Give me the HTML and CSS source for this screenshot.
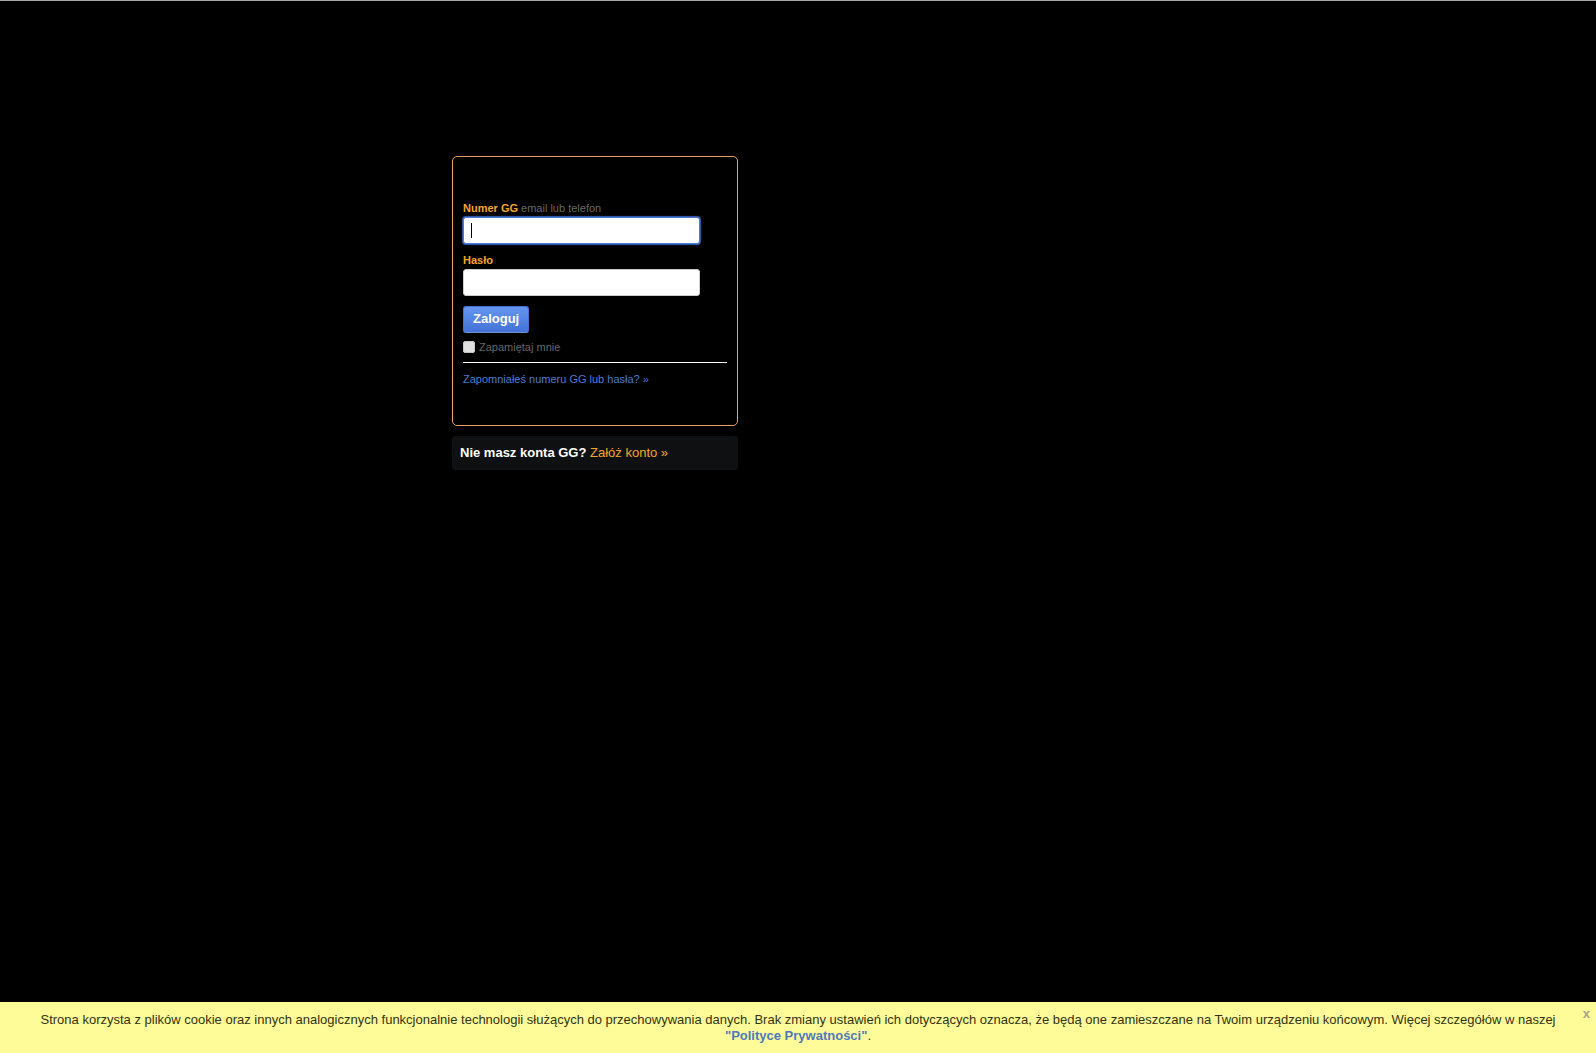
FILE: index.html
```html
<!DOCTYPE html>
<html lang="pl">
<head>
<meta charset="utf-8">
<meta name="viewport" content="width=device-width, initial-scale=1">
<title>GG - logowanie</title>
<link rel="stylesheet" href="styles.css">
</head>
<body>
<main class="page">
  <div class="column">
    <form class="login">
      <label class="label" for="login">Numer GG <span class="hint">email lub telefon</span></label>
      <div class="field">
        <input class="input input-active" id="login" type="text" autofocus>
        <span class="caret"></span>
      </div>
      <label class="label" for="password">Hasło</label>
      <div class="field">
        <input class="input" id="password" type="password">
      </div>
      <button class="submit" type="submit">Zaloguj</button>
      <div class="remember">
        <input class="check" id="remember" type="checkbox">
        <label for="remember">Zapamiętaj mnie</label>
      </div>
      <div class="forgot"><a href="#">Zapomniałeś numeru GG lub hasła? »</a></div>
    </form>
    <p class="register"><strong>Nie masz konta GG?</strong> <a href="#">Załóż konto »</a></p>
  </div>
</main>
<footer class="cookies">
  <p class="cookies-text">Strona korzysta z plików cookie oraz innych analogicznych funkcjonalnie technologii służących do przechowywania danych. Brak zmiany ustawień ich dotyczących oznacza, że będą one zamieszczane na Twoim urządzeniu końcowym. Więcej szczegółów w naszej <a href="#">"Polityce Prywatności"</a>.</p>
  <button class="close" type="button" aria-label="Zamknij">x</button>
</footer>
</body>
</html>
```
FILE: styles.css
```css
* {
  box-sizing: border-box;
}

body {
  margin: 0;
  min-height: 100vh;
  display: flex;
  flex-direction: column;
  background: #000;
  border-top: 1px solid #a5a5a5;
  font-family: "Liberation Sans", Arial, sans-serif;
  font-size: 13px;
  line-height: 16px;
}

a {
  text-decoration: none;
}

.page {
  flex: 1;
  width: 100%;
  max-width: 692px;
  margin: 0 auto;
  padding-top: 155px;
}

.column {
  max-width: 286px;
}

.login {
  padding: 44px 10px 38px;
  border: 1px solid #e8a060;
  border-radius: 5px;
  font-size: 11px;
}

.label {
  display: block;
  margin-bottom: 2px;
  color: #f5a623;
  font-weight: bold;
  line-height: 14px;
}

.hint {
  color: #666;
  font-weight: normal;
}

.field {
  position: relative;
  margin-bottom: 9px;
}

.input {
  display: block;
  width: 237px;
  max-width: 100%;
  height: 27px;
  padding: 4px 8px;
  border: 1px solid #ccc;
  border-radius: 3px;
  background: #fff;
  font: inherit;
  font-size: 13px;
  outline: none;
  caret-color: transparent;
}

.input-active {
  border-color: #4a7bd8;
  box-shadow: 0 0 1px 1px #3560b0;
}

.caret {
  position: absolute;
  left: 8px;
  top: 6px;
  width: 1px;
  height: 15px;
  background: #000;
}

.submit {
  display: block;
  height: 27px;
  margin-top: 10px;
  padding: 0 9px 2px;
  border: 1px solid #4570c8;
  border-bottom-color: #7590c8;
  border-radius: 3px;
  background: linear-gradient(#6496f0, #4472d8);
  color: #fff;
  font: bold 13px/16px "Liberation Sans", Arial, sans-serif;
}

.remember {
  display: flex;
  align-items: center;
  gap: 4px;
  padding: 6px 0 7px;
  border-bottom: 1px solid #fff;
  color: #666;
}

.check {
  appearance: none;
  width: 12px;
  height: 12px;
  margin: 0;
  border: 1px solid #c4c4c4;
  border-radius: 2px;
  background: #e0e0e0;
}

.forgot {
  padding-top: 8px;
}

.forgot a {
  color: #4a7bd0;
}

.register {
  margin: 10px 0 0;
  padding: 9px 8px;
  border-radius: 3px;
  background: #0e1012;
  color: #fff;
}

.register a {
  color: #f5a623;
}

.cookies {
  position: relative;
  padding: 10px 32px 9px;
  background: #fdfc98;
  color: #333311;
  text-align: center;
}

.cookies-text {
  margin: 0;
}

.cookies-text a {
  color: #5078c0;
  font-weight: bold;
}

.close {
  position: absolute;
  top: 4px;
  right: 6px;
  padding: 0;
  border: 0;
  background: none;
  color: #a8a48c;
  font: bold 13px/16px "Liberation Sans", Arial, sans-serif;
}
```
